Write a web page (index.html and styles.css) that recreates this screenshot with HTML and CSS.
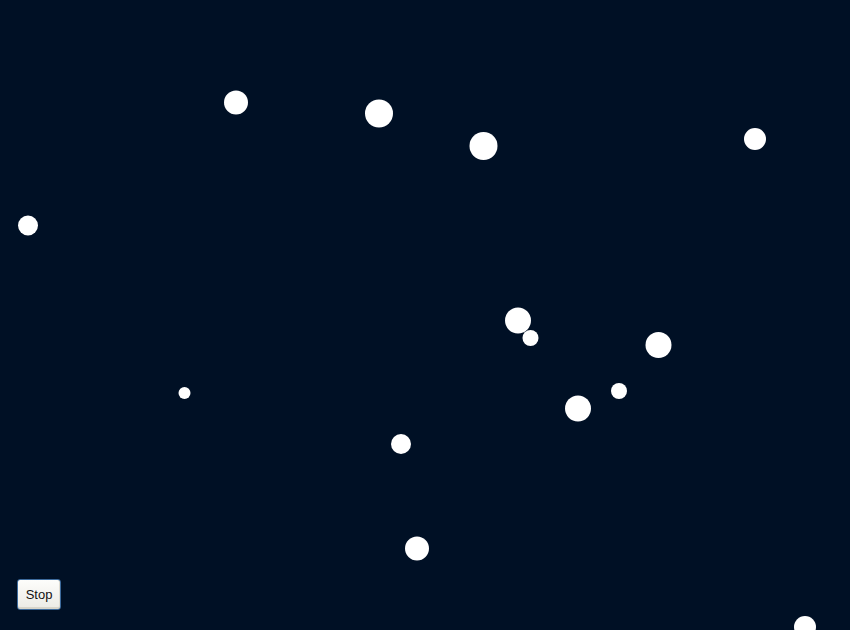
FILE: index.html
```html
<!DOCTYPE html>
<html>
<head>
<meta charset="utf-8">
<link rel="stylesheet" href="styles.css">
</head>
<body>
<svg class="sky" width="850" height="630" viewBox="0 0 850 630">
  <g fill="#ffffff">
    <circle cx="236" cy="102.5" r="12"/>
    <circle cx="379" cy="113.5" r="14"/>
    <circle cx="483.5" cy="146" r="14"/>
    <circle cx="755" cy="139" r="11"/>
    <circle cx="28" cy="225.5" r="10"/>
    <circle cx="518" cy="320.5" r="13"/>
    <circle cx="530.5" cy="338" r="8"/>
    <circle cx="658.5" cy="345" r="13"/>
    <circle cx="619" cy="391" r="8"/>
    <circle cx="578" cy="408.5" r="13"/>
    <circle cx="184.5" cy="393" r="6"/>
    <circle cx="401" cy="444" r="10"/>
    <circle cx="417" cy="548.5" r="12"/>
    <circle cx="805" cy="627" r="11"/>
  </g>
</svg>
<button class="stop">Stop</button>
</body>
</html>
```
FILE: styles.css
```css
html, body {
  margin: 0;
  padding: 0;
  width: 850px;
  height: 630px;
  overflow: hidden;
  background: #001025;
}
.sky {
  display: block;
  position: absolute;
  left: 0;
  top: 0;
}
.stop {
  position: absolute;
  left: 17px;
  top: 579px;
  width: 44px;
  height: 31px;
  padding: 0;
  font-family: "Liberation Sans", Arial, sans-serif;
  font-size: 13px;
  color: #111;
  background: linear-gradient(#fdfdfb, #ecebe5);
  border: 1px solid #3c6a9c;
  border-radius: 3px;
  box-shadow: inset 0 -2px 0 #d8d5ca, inset -1px 0 0 #e0ddd3;
}
```
